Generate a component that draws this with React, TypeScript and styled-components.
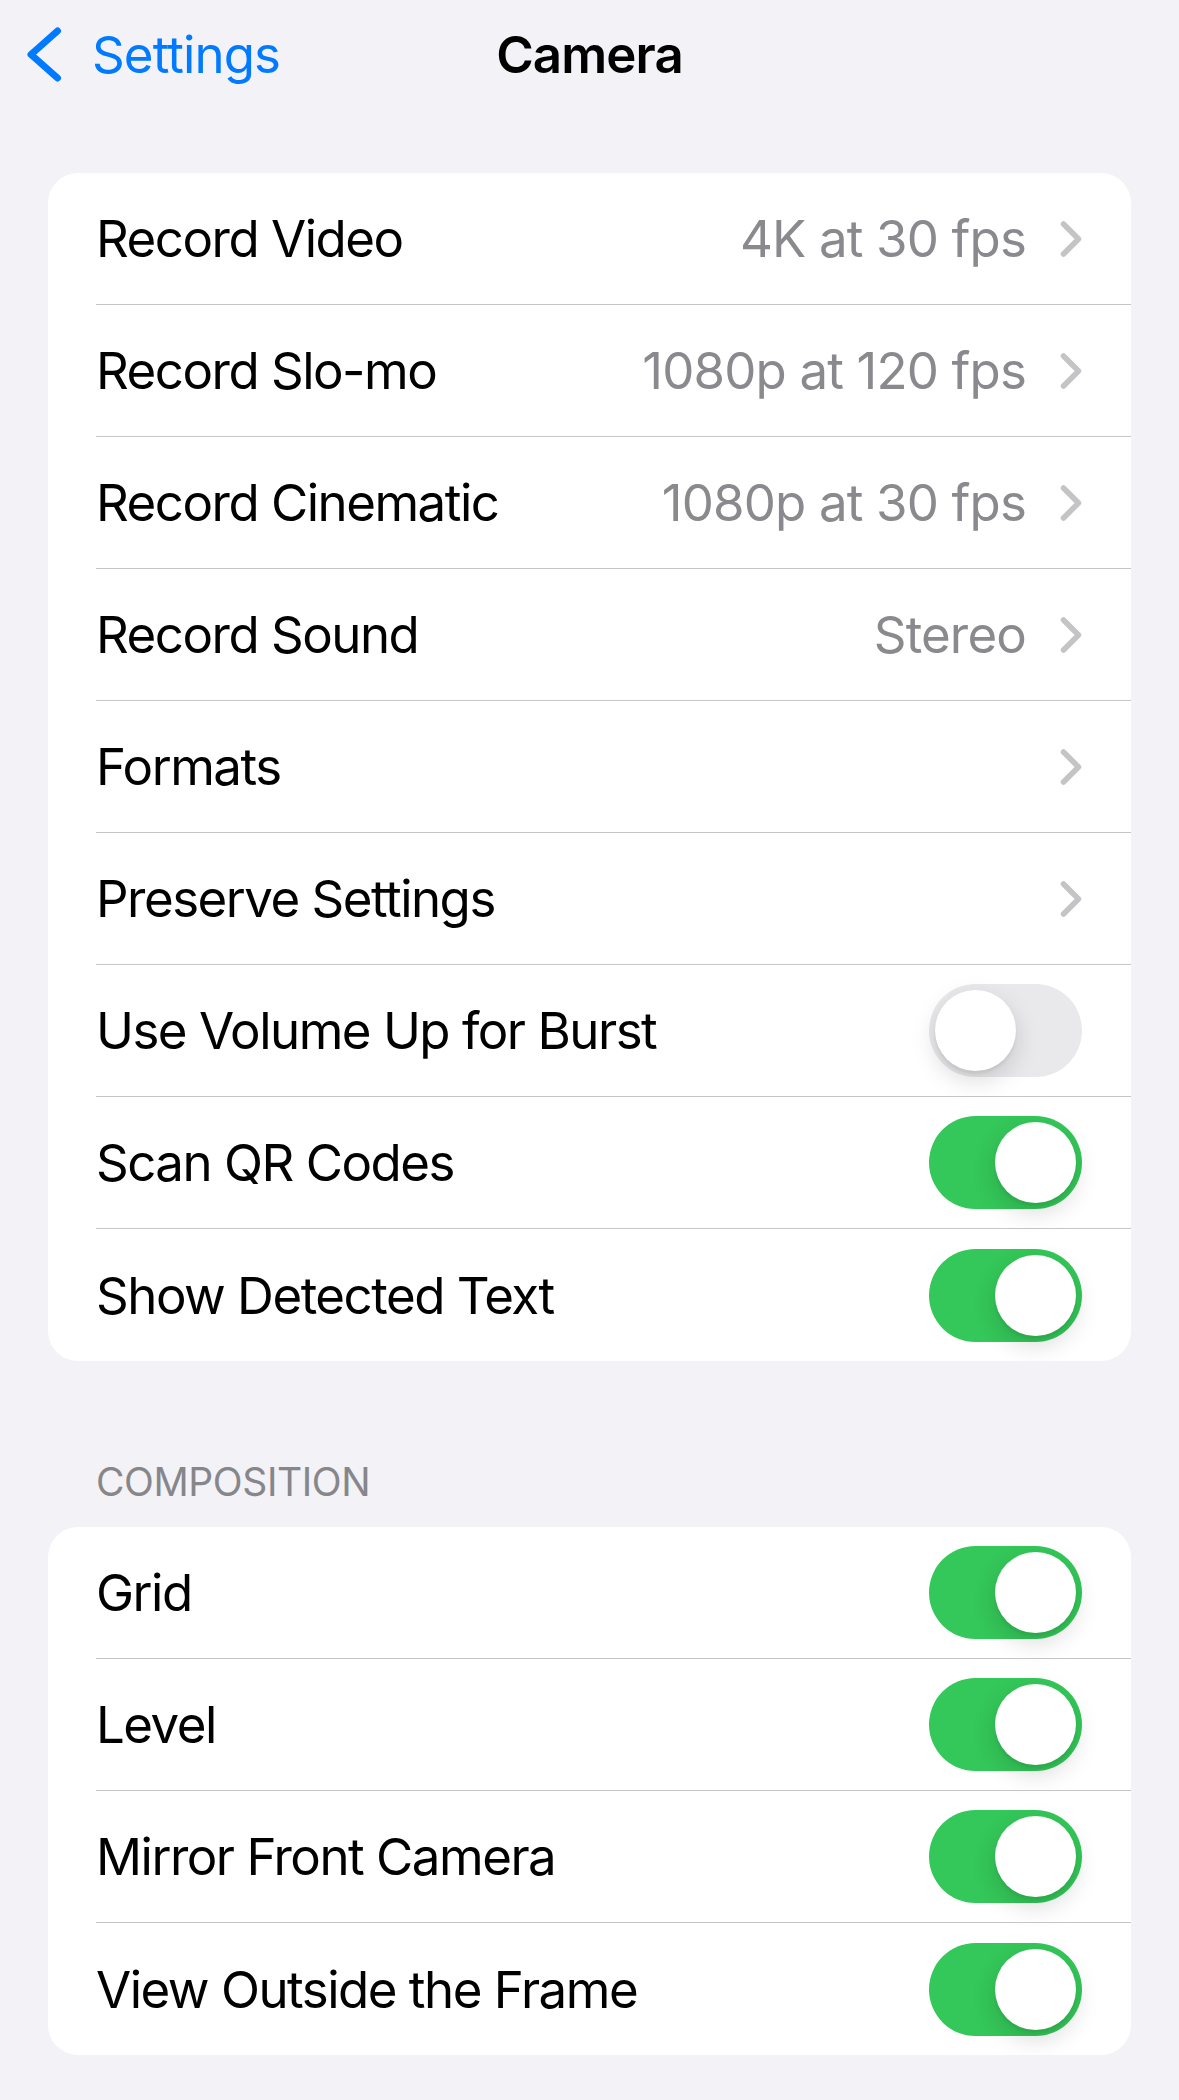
import React from "react";
import styled, { createGlobalStyle } from "styled-components";

const Global = createGlobalStyle`
  html, body { margin: 0; padding: 0; background: #f2f2f7; }
  body { font-family: Inter, "Noto Sans", "Liberation Sans", sans-serif; -webkit-font-smoothing: antialiased; }
  * { box-sizing: border-box; }
`;

const Page = styled.div`
  min-height: 2100px;
  background: #f2f2f7;
  padding-bottom: 40px;
`;

const NavBar = styled.header`
  height: 108px;
  display: grid;
  grid-template-columns: 1fr auto 1fr;
  align-items: center;
`;

const BackButton = styled.button`
  justify-self: start;
  display: flex;
  align-items: center;
  gap: 30px;
  padding: 0 0 0 26px;
  border: none;
  background: none;
  color: #007aff;
  font-family: inherit;
  font-size: 51px;
  letter-spacing: -0.9px;
  cursor: pointer;
`;

const Title = styled.h1`
  margin: 0;
  font-size: 51px;
  font-weight: 600;
  letter-spacing: -0.9px;
  color: #000;
`;

const Card = styled.section<{ $top: number }>`
  margin: ${(p) => p.$top}px 48px 0;
  background: #fff;
  border-radius: 30px;
  overflow: hidden;
`;

const Row = styled.div`
  display: flex;
  padding-left: 48px;
  &:last-child > div { border-bottom: none; }
`;

const RowBody = styled.div`
  flex: 1;
  height: 132px;
  display: flex;
  align-items: center;
  padding-right: 49px;
  border-bottom: 1px solid #c6c6c8;
`;

const Label = styled.span`
  flex: 1;
  font-size: 51px;
  color: #000;
  letter-spacing: -1.5px;
  white-space: nowrap;
`;

const Value = styled.span`
  font-size: 51px;
  color: #8a8a8e;
  letter-spacing: -0.85px;
  margin-right: 34px;
  white-space: nowrap;
`;

const SectionHeader = styled.div`
  margin-top: 97px;
  padding: 0 96px 21px;
  font-size: 39px;
  line-height: 48px;
  color: #86868b;
  letter-spacing: -0.4px;
`;

const Track = styled.span<{ $on: boolean }>`
  position: relative;
  display: block;
  width: 153px;
  height: 93px;
  border-radius: 47px;
  background: ${(p) => (p.$on ? "#34c759" : "#e9e9eb")};
`;

const Thumb = styled.span<{ $on: boolean }>`
  position: absolute;
  top: 6px;
  left: ${(p) => (p.$on ? "66px" : "6px")};
  width: 81px;
  height: 81px;
  border-radius: 50%;
  background: #fff;
  box-shadow: 0 9px 24px rgba(0, 0, 0, 0.15), 0 3px 3px rgba(0, 0, 0, 0.06);
`;

const Chevron = () => (
  <svg width="22" height="36" viewBox="0 0 22 36" fill="none">
    <path d="M3.5 3 L18.5 18 L3.5 33" stroke="#c4c4c7" strokeWidth="5.5" strokeLinecap="round" strokeLinejoin="round" />
  </svg>
);

const BackChevron = () => (
  <svg width="36" height="55" viewBox="0 0 36 55" fill="none">
    <path d="M31.5 4 L5 27.5 L31.5 51" stroke="#007aff" strokeWidth="7" strokeLinecap="round" strokeLinejoin="round" />
  </svg>
);

const Toggle = ({ on }: { on: boolean }) => (
  <Track $on={on}>
    <Thumb $on={on} />
  </Track>
);

type Item =
  | { label: string; kind: "link"; value?: string }
  | { label: string; kind: "toggle"; on: boolean };

const main: Item[] = [
  { label: "Record Video", kind: "link", value: "4K at 30 fps" },
  { label: "Record Slo-mo", kind: "link", value: "1080p at 120 fps" },
  { label: "Record Cinematic", kind: "link", value: "1080p at 30 fps" },
  { label: "Record Sound", kind: "link", value: "Stereo" },
  { label: "Formats", kind: "link" },
  { label: "Preserve Settings", kind: "link" },
  { label: "Use Volume Up for Burst", kind: "toggle", on: false },
  { label: "Scan QR Codes", kind: "toggle", on: true },
  { label: "Show Detected Text", kind: "toggle", on: true },
];

const composition: Item[] = [
  { label: "Grid", kind: "toggle", on: true },
  { label: "Level", kind: "toggle", on: true },
  { label: "Mirror Front Camera", kind: "toggle", on: true },
  { label: "View Outside the Frame", kind: "toggle", on: true },
];

const renderRow = (it: Item) => (
  <Row key={it.label}>
    <RowBody>
      <Label>{it.label}</Label>
      {it.kind === "link" ? (
        <>
          {it.value && <Value>{it.value}</Value>}
          <Chevron />
        </>
      ) : (
        <Toggle on={it.on} />
      )}
    </RowBody>
  </Row>
);

export default function App() {
  return (
    <Page>
      <Global />
      <NavBar>
        <BackButton>
          <BackChevron />
          Settings
        </BackButton>
        <Title>Camera</Title>
        <span />
      </NavBar>
      <Card $top={65}>{main.map(renderRow)}</Card>
      <SectionHeader>COMPOSITION</SectionHeader>
      <Card $top={0}>{composition.map(renderRow)}</Card>
    </Page>
  );
}
